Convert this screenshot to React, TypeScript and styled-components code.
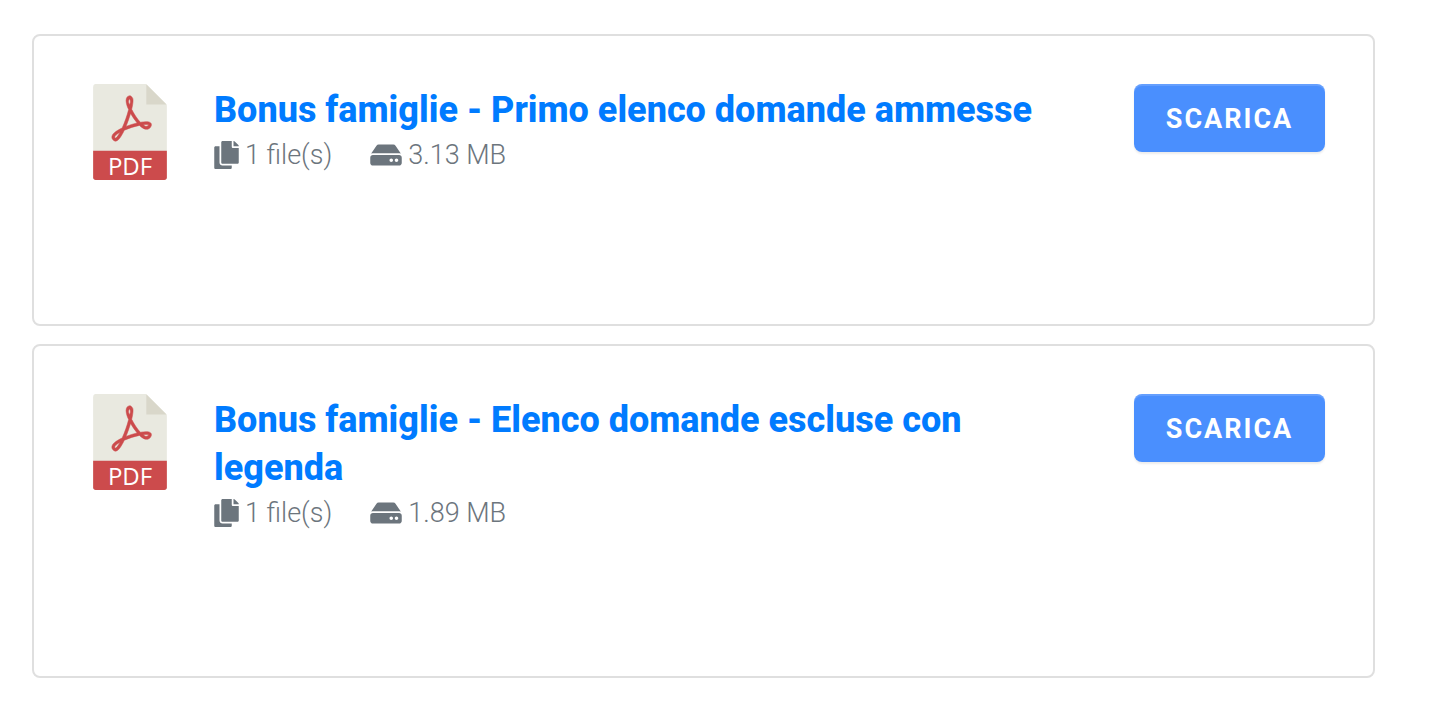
import React from "react";
import styled, { createGlobalStyle } from "styled-components";
import { FaCopy, FaHdd } from "react-icons/fa";

const GlobalStyle = createGlobalStyle`
  *, *::before, *::after { box-sizing: border-box; }
  body {
    margin: 0;
    background: #ffffff;
    color: #6c757d;
    font-family: Roboto, "Liberation Sans", sans-serif;
  }
`;

const List = styled.main`
  display: flex;
  flex-direction: column;
  gap: 18px;
  padding: 34px 63px 34px 32px;
`;

const Card = styled.article`
  display: flex;
  align-items: flex-start;
  min-height: 292px;
  padding: 48px 48px 142px;
  border: 2px solid #dfdfdf;
  border-radius: 8px;
`;

const FileIcon = styled.svg`
  flex: none;
  width: 96px;
  height: 96px;
  margin-right: 36px;
  overflow: visible;
`;

const IconLabel = styled.text`
  fill: #ffffff;
  font-family: "Open Sans", "Noto Sans", sans-serif;
  font-size: 14px;
  font-weight: 500;
  text-anchor: middle;
`;

const Body = styled.div`
  flex: 1;
  min-width: 0;
  margin-right: 48px;
  padding-top: 2px;
`;

const Title = styled.h3`
  margin: 0;
  font-size: 36px;
  font-weight: 800;
  line-height: 48px;
`;

const TitleLink = styled.a`
  color: #007bff;
  text-decoration: none;
`;

const Meta = styled.div`
  display: flex;
  gap: 38px;
  font-size: 27px;
  font-weight: 300;
  line-height: 42px;
`;

const MetaItem = styled.span<{ $iconWidth: number }>`
  display: inline-flex;
  align-items: center;
  gap: 6px;

  svg {
    flex: none;
    width: ${({ $iconWidth }) => $iconWidth}px;
    height: 28px;
  }
`;

const DownloadButton = styled.button`
  flex: none;
  width: 191px;
  height: 68px;
  padding: 2px 0 0;
  border: 0;
  border-radius: 8px;
  background: #4a8ffe;
  box-shadow: inset 0 2px 0 rgba(255, 255, 255, 0.15), 0 2px 2px rgba(0, 0, 0, 0.075);
  color: #ffffff;
  font-family: inherit;
  font-size: 27px;
  font-weight: 700;
  letter-spacing: 2px;
  text-transform: uppercase;
  cursor: pointer;
`;

function PdfIcon() {
  return (
    <FileIcon viewBox="0 0 56 56" role="img" aria-label="PDF">
      <path
        fill="#e9e9e0"
        d="M36.985,0H7.963C7.155,0,6.5,0.655,6.5,1.926V55c0,0.345,0.655,1,1.463,1h40.074c0.808,0,1.463-0.655,1.463-1V12.978c0-0.696-0.093-0.92-0.257-1.085L37.607,0.257C37.442,0.093,37.218,0,36.985,0z"
      />
      <polygon fill="#d9d7ca" points="37.5,0.151 37.5,12 49.349,12" />
      <path
        fill="#cc4b4c"
        d="M19.514,33.324L19.514,33.324c-0.348,0-0.682-0.113-0.967-0.326c-1.041-0.781-1.181-1.65-1.115-2.242c0.182-1.628,2.195-3.332,5.985-5.068c1.504-3.296,2.935-7.357,3.788-10.75c-0.998-2.172-1.968-4.99-1.261-6.643c0.248-0.579,0.557-1.023,1.134-1.215c0.228-0.076,0.804-0.172,1.016-0.172c0.504,0,0.947,0.649,1.261,1.049c0.295,0.376,0.964,1.173-0.373,6.802c1.348,2.784,3.258,5.62,5.088,7.562c1.311-0.237,2.439-0.358,3.358-0.358c1.566,0,2.515,0.365,2.902,1.117c0.32,0.622,0.189,1.349-0.39,2.16c-0.557,0.779-1.325,1.191-2.22,1.191c-1.216,0-2.632-0.768-4.211-2.285c-2.837,0.593-6.15,1.651-8.828,2.822c-0.836,1.774-1.637,3.203-2.383,4.251C21.273,32.654,20.389,33.324,19.514,33.324z M22.176,28.198c-2.137,1.201-3.008,2.188-3.071,2.744c-0.01,0.092-0.037,0.334,0.431,0.692C19.685,31.587,20.555,31.19,22.176,28.198z M35.813,23.756c0.815,0.627,1.014,0.944,1.547,0.944c0.234,0,0.901-0.01,1.21-0.441c0.149-0.209,0.207-0.343,0.23-0.415c-0.123-0.065-0.286-0.197-1.175-0.197C37.12,23.648,36.485,23.67,35.813,23.756z M28.343,17.174c-0.715,2.474-1.659,5.145-2.674,7.564c2.09-0.811,4.362-1.519,6.496-2.02C30.815,21.15,29.466,19.192,28.343,17.174z M27.736,8.712c-0.098,0.033-1.33,1.757,0.096,3.216C28.781,9.813,27.779,8.698,27.736,8.712z"
        stroke="#cc4b4c"
        strokeWidth="0.3"
      />
      <path
        fill="#cc4b4c"
        d="M48.037,56H7.963C7.155,56,6.5,55.345,6.5,54.537V39h43v15.537C49.5,55.345,48.845,56,48.037,56z"
      />
      <IconLabel x="28" y="53">PDF</IconLabel>
    </FileIcon>
  );
}

type Download = { title: string; files: number; size: string };

const downloads: Download[] = [
  { title: "Bonus famiglie - Primo elenco domande ammesse", files: 1, size: "3.13 MB" },
  { title: "Bonus famiglie - Elenco domande escluse con legenda", files: 1, size: "1.89 MB" },
];

export default function App() {
  return (
    <>
      <GlobalStyle />
      <List>
        {downloads.map((item) => (
          <Card key={item.title}>
            <PdfIcon />
            <Body>
              <Title>
                <TitleLink href="#">{item.title}</TitleLink>
              </Title>
              <Meta>
                <MetaItem $iconWidth={25}>
                  <FaCopy aria-hidden="true" />
                  {`${item.files} file(s)`}
                </MetaItem>
                <MetaItem $iconWidth={32}>
                  <FaHdd aria-hidden="true" />
                  {item.size}
                </MetaItem>
              </Meta>
            </Body>
            <DownloadButton type="button">Scarica</DownloadButton>
          </Card>
        ))}
      </List>
    </>
  );
}
